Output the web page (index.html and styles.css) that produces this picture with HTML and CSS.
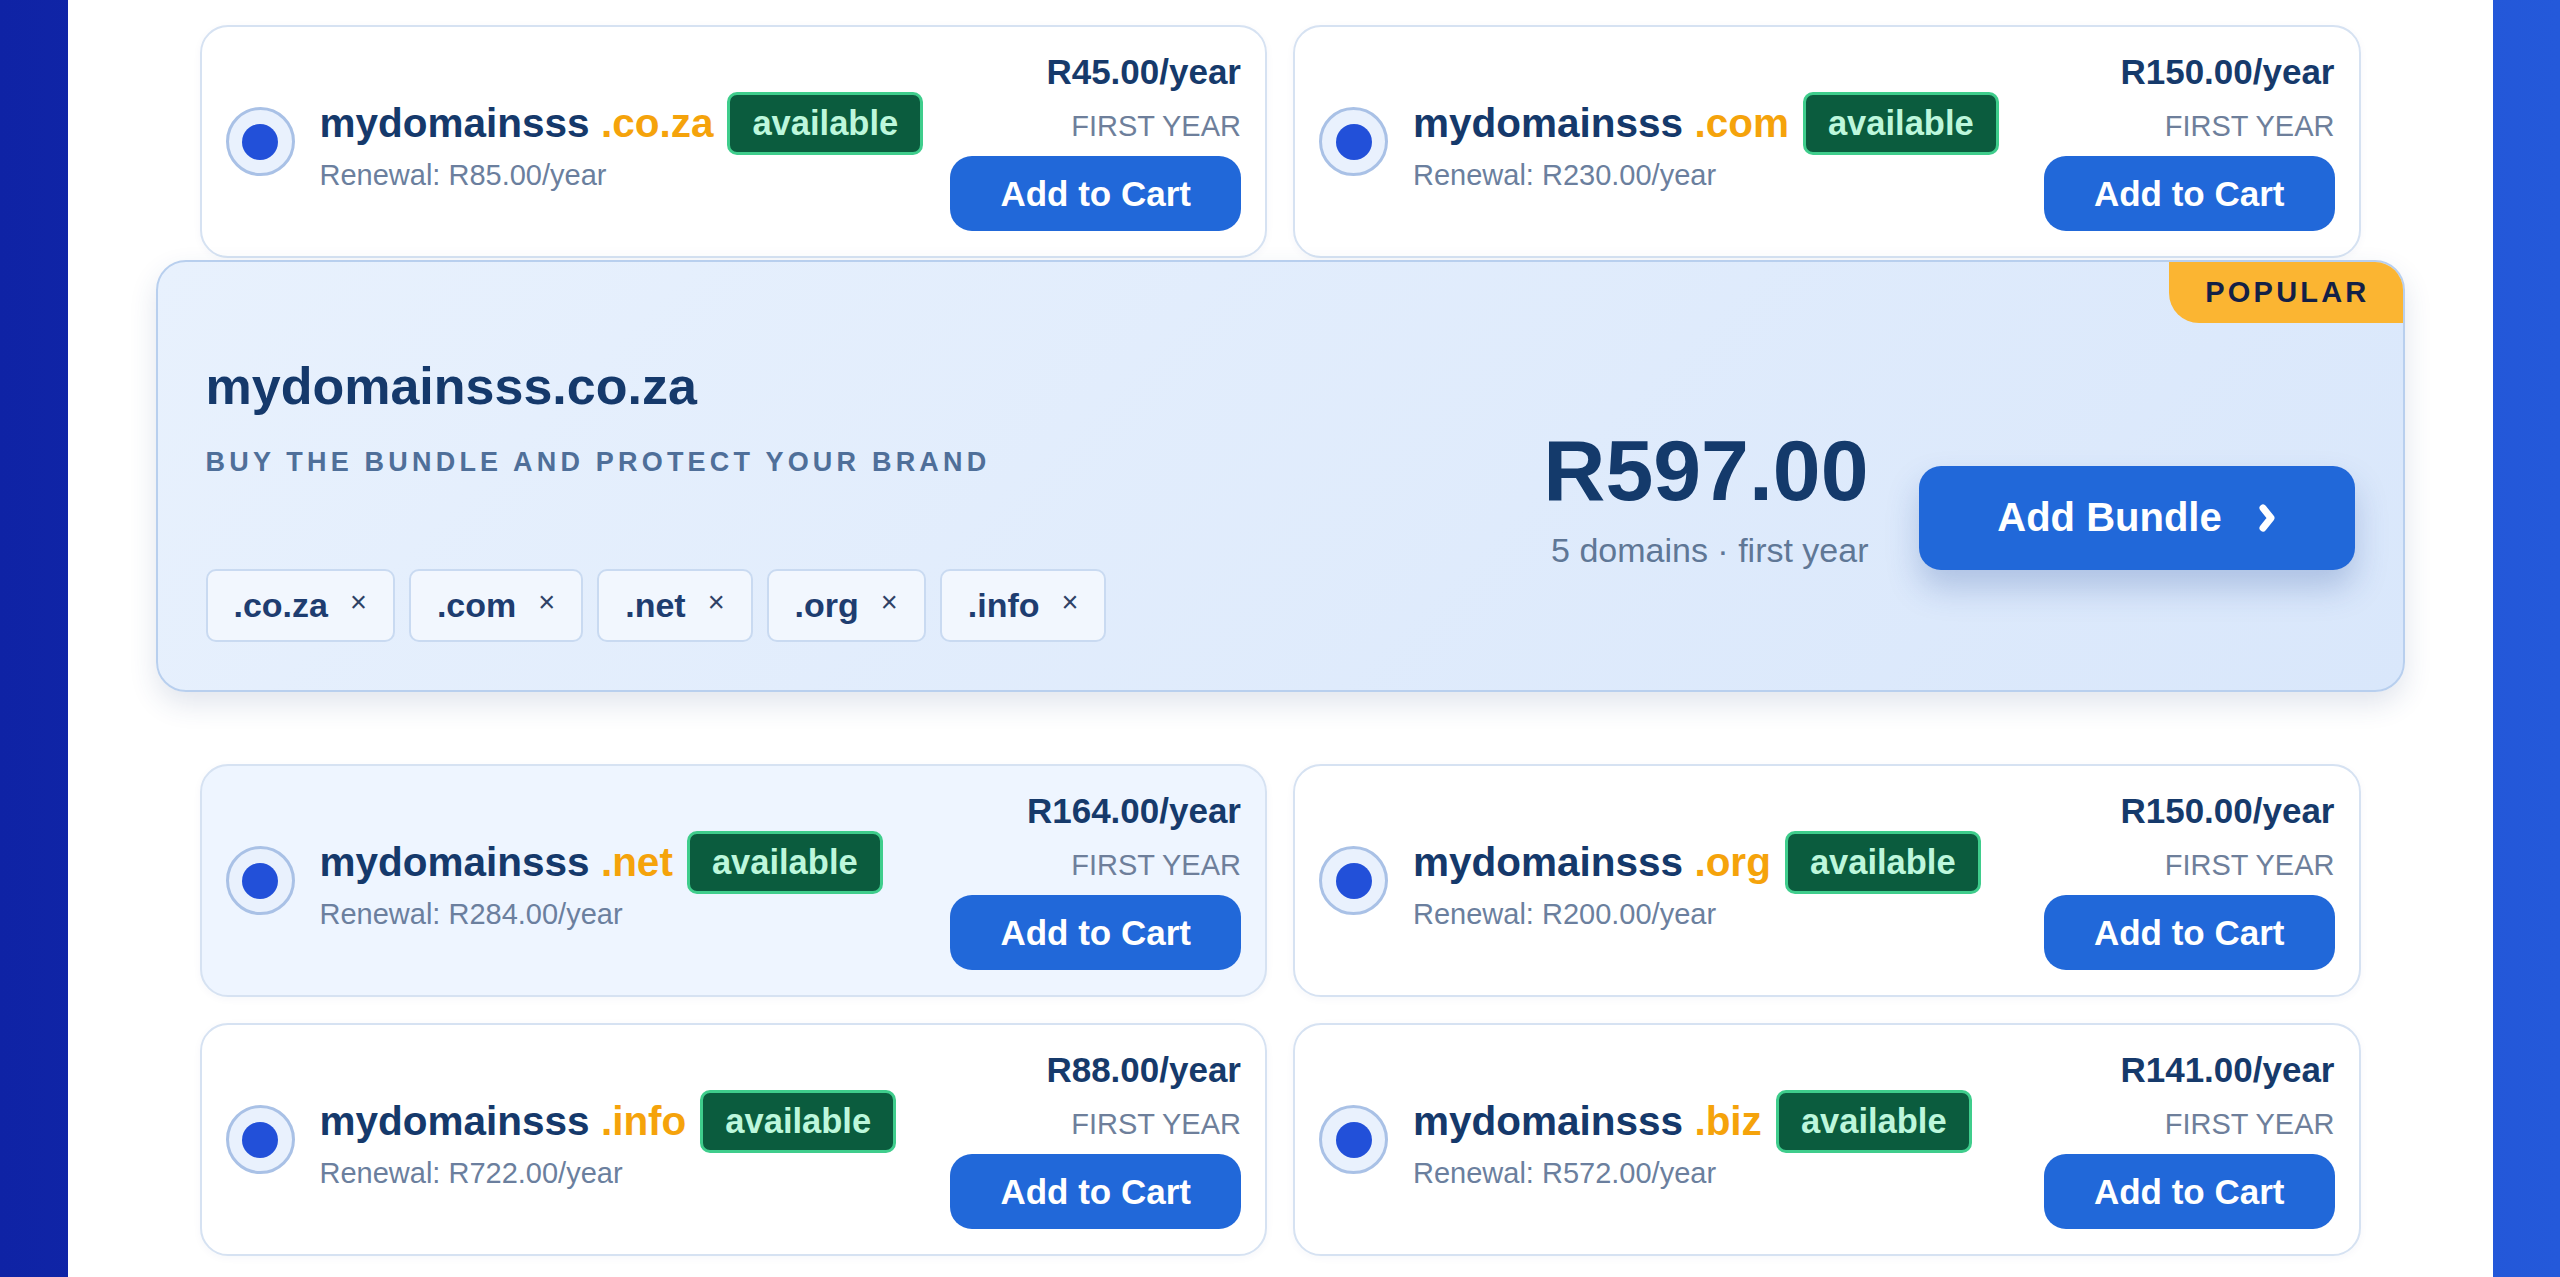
FILE: index.html
```html
<!DOCTYPE html>
<html lang="en">
<head>
    <meta charset="UTF-8">
    <meta name="viewport" content="width=device-width, initial-scale=1.0">
    <title>Domain Search - Results</title>
    <link rel="stylesheet" href="styles.css">
</head>
<body>
    <main class="page">
        <section class="domain-grid">
            <div class="domain-card">
                <div class="domain-info">
                    <span class="radio"><span class="radio-dot"></span></span>
                    <div class="domain-text">
                        <div class="name-row">
                            <span class="domain-name">mydomainsss <span class="tld">.co.za</span></span>
                            <span class="status">available</span>
                        </div>
                        <div class="renewal">Renewal: R85.00/year</div>
                    </div>
                </div>
                <div class="price-col">
                    <div class="price">R45.00/year</div>
                    <div class="price-note">FIRST YEAR</div>
                    <button class="cart-btn">Add to Cart</button>
                </div>
            </div>
            <div class="domain-card">
                <div class="domain-info">
                    <span class="radio"><span class="radio-dot"></span></span>
                    <div class="domain-text">
                        <div class="name-row">
                            <span class="domain-name">mydomainsss <span class="tld">.com</span></span>
                            <span class="status">available</span>
                        </div>
                        <div class="renewal">Renewal: R230.00/year</div>
                    </div>
                </div>
                <div class="price-col">
                    <div class="price">R150.00/year</div>
                    <div class="price-note">FIRST YEAR</div>
                    <button class="cart-btn">Add to Cart</button>
                </div>
            </div>
        </section>

        <!-- Bundle -->
        <section class="bundle">
            <span class="popular">POPULAR</span>
            <div class="bundle-info">
                <h2 class="bundle-title">mydomainsss.co.za</h2>
                <p class="bundle-sub">BUY THE BUNDLE AND PROTECT YOUR BRAND</p>
                <div class="chips">
                    <span class="chip">.co.za <span class="chip-x">×</span></span>
                    <span class="chip">.com <span class="chip-x">×</span></span>
                    <span class="chip">.net <span class="chip-x">×</span></span>
                    <span class="chip">.org <span class="chip-x">×</span></span>
                    <span class="chip">.info <span class="chip-x">×</span></span>
                </div>
            </div>
            <div class="bundle-buy">
                <div class="bundle-price">
                    <div class="bundle-total">R597.00</div>
                    <div class="bundle-note">5 domains · first year</div>
                </div>
                <button class="bundle-btn">Add Bundle
                    <svg width="18" height="30" viewBox="0 0 18 30"><polyline points="5,5 13,15 5,25" fill="none" stroke="#fff" stroke-width="7" stroke-linecap="round" stroke-linejoin="round"/></svg>
                </button>
            </div>
        </section>

        <section class="domain-grid">
            <div class="domain-card selected">
                <div class="domain-info">
                    <span class="radio"><span class="radio-dot"></span></span>
                    <div class="domain-text">
                        <div class="name-row">
                            <span class="domain-name">mydomainsss <span class="tld">.net</span></span>
                            <span class="status">available</span>
                        </div>
                        <div class="renewal">Renewal: R284.00/year</div>
                    </div>
                </div>
                <div class="price-col">
                    <div class="price">R164.00/year</div>
                    <div class="price-note">FIRST YEAR</div>
                    <button class="cart-btn">Add to Cart</button>
                </div>
            </div>
            <div class="domain-card">
                <div class="domain-info">
                    <span class="radio"><span class="radio-dot"></span></span>
                    <div class="domain-text">
                        <div class="name-row">
                            <span class="domain-name">mydomainsss <span class="tld">.org</span></span>
                            <span class="status">available</span>
                        </div>
                        <div class="renewal">Renewal: R200.00/year</div>
                    </div>
                </div>
                <div class="price-col">
                    <div class="price">R150.00/year</div>
                    <div class="price-note">FIRST YEAR</div>
                    <button class="cart-btn">Add to Cart</button>
                </div>
            </div>
            <div class="domain-card">
                <div class="domain-info">
                    <span class="radio"><span class="radio-dot"></span></span>
                    <div class="domain-text">
                        <div class="name-row">
                            <span class="domain-name">mydomainsss <span class="tld">.info</span></span>
                            <span class="status">available</span>
                        </div>
                        <div class="renewal">Renewal: R722.00/year</div>
                    </div>
                </div>
                <div class="price-col">
                    <div class="price">R88.00/year</div>
                    <div class="price-note">FIRST YEAR</div>
                    <button class="cart-btn">Add to Cart</button>
                </div>
            </div>
            <div class="domain-card">
                <div class="domain-info">
                    <span class="radio"><span class="radio-dot"></span></span>
                    <div class="domain-text">
                        <div class="name-row">
                            <span class="domain-name">mydomainsss <span class="tld">.biz</span></span>
                            <span class="status">available</span>
                        </div>
                        <div class="renewal">Renewal: R572.00/year</div>
                    </div>
                </div>
                <div class="price-col">
                    <div class="price">R141.00/year</div>
                    <div class="price-note">FIRST YEAR</div>
                    <button class="cart-btn">Add to Cart</button>
                </div>
            </div>
        </section>
    </main>
</body>
</html>
```

FILE: styles.css
```css
/* Basis */
body {
    margin: 0;
    height: 1277px;
    overflow: hidden;
    background: linear-gradient(90deg, #0f23a5, #2459da);
    font-family: "Liberation Sans", Arial, sans-serif;
    color: #15396b;
}

.page {
    width: 2425px;
    min-height: 1277px;
    margin: 0 auto;
    padding: 25px 132px 0;
    box-sizing: border-box;
    background: #fff;
}

/* Domain cards */
.domain-grid {
    display: grid;
    grid-template-columns: 1fr 1fr;
    gap: 26px;
}

.domain-card {
    display: flex;
    align-items: center;
    justify-content: space-between;
    padding: 25px 24px;
    border: 2px solid #d6e2f2;
    border-radius: 28px;
    background: #fff;
    box-shadow: 0 2px 8px rgba(30, 60, 120, 0.04);
}

.domain-card.selected {
    background: #eef5ff;
}

.domain-info {
    display: flex;
    align-items: center;
    gap: 25px;
}

.radio {
    width: 63px;
    height: 63px;
    border: 3px solid #a9c1e6;
    border-radius: 50%;
    background: #e9f1fd;
    display: flex;
    align-items: center;
    justify-content: center;
}

.radio-dot {
    width: 36px;
    height: 36px;
    border-radius: 50%;
    background: #2250d9;
}

.name-row {
    display: flex;
    align-items: center;
    gap: 14px;
}

.domain-name {
    font-size: 40.5px;
    font-weight: bold;
    line-height: 46px;
    color: #15396b;
}

.tld {
    color: #f5a30b;
}

.status {
    height: 57px;
    line-height: 57px;
    padding: 0 22px;
    border: 3px solid #3fcd8c;
    border-radius: 10px;
    background: #0b5c3e;
    color: #bdf7dc;
    font-size: 34.5px;
    font-weight: bold;
}

.renewal {
    margin-top: 3px;
    font-size: 29px;
    line-height: 34px;
    color: #6b7f9e;
}

.price-col {
    display: flex;
    flex-direction: column;
    align-items: flex-end;
}

.price {
    font-size: 35px;
    font-weight: bold;
    line-height: 40px;
    color: #163a6b;
}

.price-note {
    margin-top: 17px;
    font-size: 29px;
    line-height: 34px;
    color: #6e7f9b;
}

.cart-btn {
    margin-top: 13px;
    height: 75px;
    padding: 0 50px;
    border: none;
    border-radius: 22px;
    background: #2168d9;
    color: #fff;
    font-family: inherit;
    font-size: 35px;
    font-weight: bold;
    cursor: pointer;
}

/* Bundle */
.bundle {
    position: relative;
    overflow: hidden;
    display: flex;
    align-items: center;
    justify-content: space-between;
    margin: 2px -44px 72px;
    padding: 93px 48px 48px;
    border: 2px solid #b8cfee;
    border-radius: 30px;
    background: linear-gradient(135deg, #e8f1fd, #d9e7fb);
    box-shadow: 0 12px 28px rgba(40, 70, 130, 0.14);
}

.popular {
    position: absolute;
    top: 0;
    right: 0;
    height: 61px;
    line-height: 61px;
    padding: 0 33px 0 36px;
    border-bottom-left-radius: 30px;
    background: #fbb532;
    color: #132046;
    font-size: 29px;
    font-weight: bold;
    letter-spacing: 3.2px;
}

.bundle-title {
    margin: 0;
    font-size: 52px;
    line-height: 62px;
    color: #15396b;
}

.bundle-sub {
    margin: 30px 0 0;
    font-size: 27px;
    line-height: 31px;
    font-weight: bold;
    letter-spacing: 4.2px;
    color: #4f6f99;
}

.chips {
    display: flex;
    gap: 14px;
    margin-top: 91px;
}

.chip {
    display: flex;
    align-items: center;
    gap: 22px;
    height: 69px;
    padding: 0 26px;
    border: 2px solid #c9daf1;
    border-radius: 10px;
    background: #f2f7fe;
    color: #1e3d70;
    font-size: 34px;
    font-weight: bold;
}

.chip-x {
    font-size: 29px;
    font-weight: normal;
    color: #2f4266;
    margin-top: -6px;
}

.bundle-buy {
    display: flex;
    align-items: flex-end;
    gap: 50px;
}

.bundle-price {
    text-align: right;
}

.bundle-total {
    font-size: 86px;
    font-weight: bold;
    line-height: 85px;
    color: #143a6b;
}

.bundle-note {
    margin-top: 17px;
    font-size: 34px;
    line-height: 40px;
    color: #5f7796;
}

.bundle-btn {
    display: flex;
    align-items: center;
    justify-content: center;
    gap: 36px;
    width: 436px;
    height: 104px;
    border: none;
    border-radius: 22px;
    background: #2168d9;
    color: #fff;
    font-family: inherit;
    font-size: 40px;
    font-weight: bold;
    box-shadow: 0 18px 32px rgba(40, 80, 160, 0.25);
    cursor: pointer;
}
```
